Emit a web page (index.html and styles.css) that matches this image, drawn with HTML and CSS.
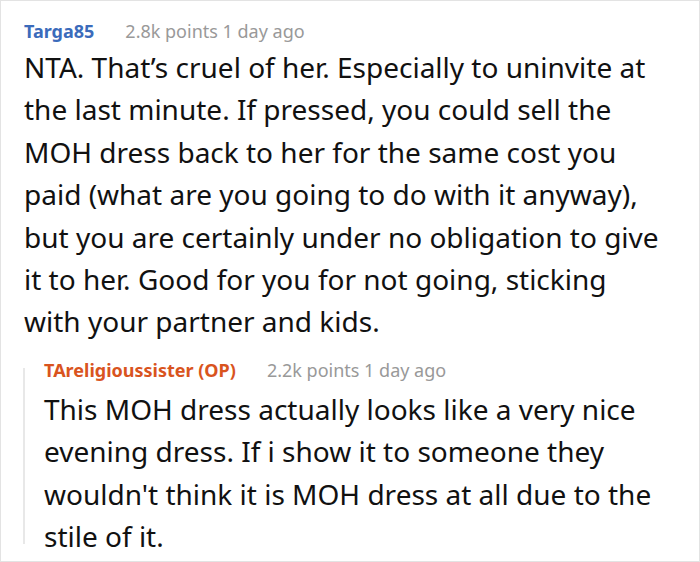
FILE: index.html
```html
<!DOCTYPE html>
<html>
<head>
<meta charset="utf-8">
<link rel="stylesheet" href="styles.css">
</head>
<body>
<div class="frame">
  <div class="comment">
    <div class="meta">
      <span class="author">Targa85</span>
      <span class="info">2.8k points 1 day ago</span>
    </div>
    <p class="text">NTA. That’s cruel of her. Especially to uninvite at the last minute. If pressed, you could sell the MOH dress back to her for the same cost you paid (what are you going to do with it anyway), but you are certainly under no obligation to give it to her. Good for you for not going, sticking with your partner and kids.</p>
    <div class="reply">
      <div class="meta">
        <span class="author op">TAreligioussister (OP)</span>
        <span class="info">2.2k points 1 day ago</span>
      </div>
      <p class="text">This MOH dress actually looks like a very nice evening dress. If i show it to someone they wouldn't think it is MOH dress at all due to the stile of it.</p>
    </div>
  </div>
</div>
</body>
</html>
```
FILE: styles.css
```css
html, body {
  margin: 0;
  padding: 0;
  background: #fff;
}
.frame {
  box-sizing: border-box;
  width: 700px;
  height: 562px;
  border: 1px solid #e3e3e3;
  overflow: hidden;
  font-family: "Noto Sans", "Open Sans", sans-serif;
  color: #111;
}
.comment {
  padding: 17px 0 0 23px;
}
.meta {
  display: flex;
  gap: 31px;
  font-size: 18px;
  line-height: 26px;
}
.author {
  font-weight: 700;
  color: #3b6bbb;
}
.author.op {
  color: #d9541e;
}
.info {
  color: #999;
}
.text {
  margin: 2px 0 0;
  font-size: 28px;
  line-height: 42.4px;
  padding-right: 35px;
}
.reply {
  position: relative;
  margin-top: 14px;
  padding-left: 20px;
}
.reply::before {
  content: "";
  position: absolute;
  left: -1px;
  top: 11px;
  height: 176px;
  width: 2px;
  background: #e8e8e8;
}
.reply .text {
  margin-top: 5px;
}
```
